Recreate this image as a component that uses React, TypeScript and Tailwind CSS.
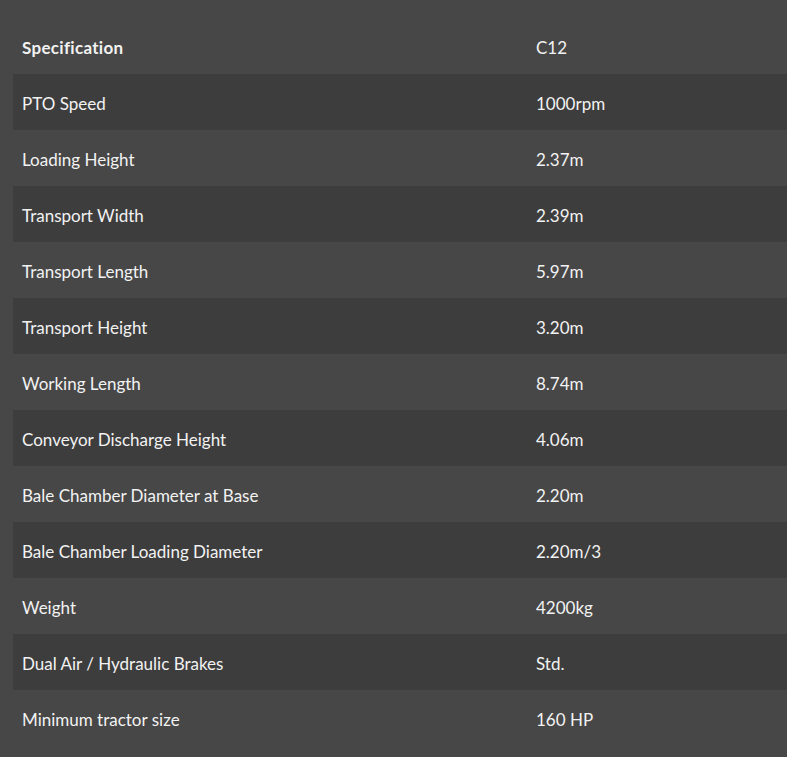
const rows: [string, string][] = [
  ["PTO Speed", "1000rpm"],
  ["Loading Height", "2.37m"],
  ["Transport Width", "2.39m"],
  ["Transport Length", "5.97m"],
  ["Transport Height", "3.20m"],
  ["Working Length", "8.74m"],
  ["Conveyor Discharge Height", "4.06m"],
  ["Bale Chamber Diameter at Base", "2.20m"],
  ["Bale Chamber Loading Diameter", "2.20m/3"],
  ["Weight", "4200kg"],
  ["Dual Air / Hydraulic Brakes", "Std."],
  ["Minimum tractor size", "160 HP"],
];

export default function App() {
  return (
    <div
      className="min-h-[757px] w-full bg-[#474747] pt-[18px] pb-[11px] pl-[13px] text-[#f2f2f2] overflow-hidden"
      style={{ fontFamily: "Lato, 'Open Sans', sans-serif" }}
    >
      <div className="w-[774px]">
        <div className="grid grid-cols-[514px_1fr] h-[56px] items-center pt-[3px] text-[17px] font-bold">
          <div className="pl-[9px] tracking-[0.3px]">Specification</div>
          <div className="pl-[9px] font-normal">C12</div>
        </div>
        {rows.map(([k, v], i) => (
          <div
            key={k}
            className={
              "grid grid-cols-[514px_1fr] h-[56px] items-center pt-[3px] text-[17px] " +
              (i % 2 === 0 ? "bg-[#3d3d3d]" : "bg-[#474747]")
            }
          >
            <div className="pl-[9px]">{k}</div>
            <div className="pl-[9px]">{v}</div>
          </div>
        ))}
      </div>
    </div>
  );
}
